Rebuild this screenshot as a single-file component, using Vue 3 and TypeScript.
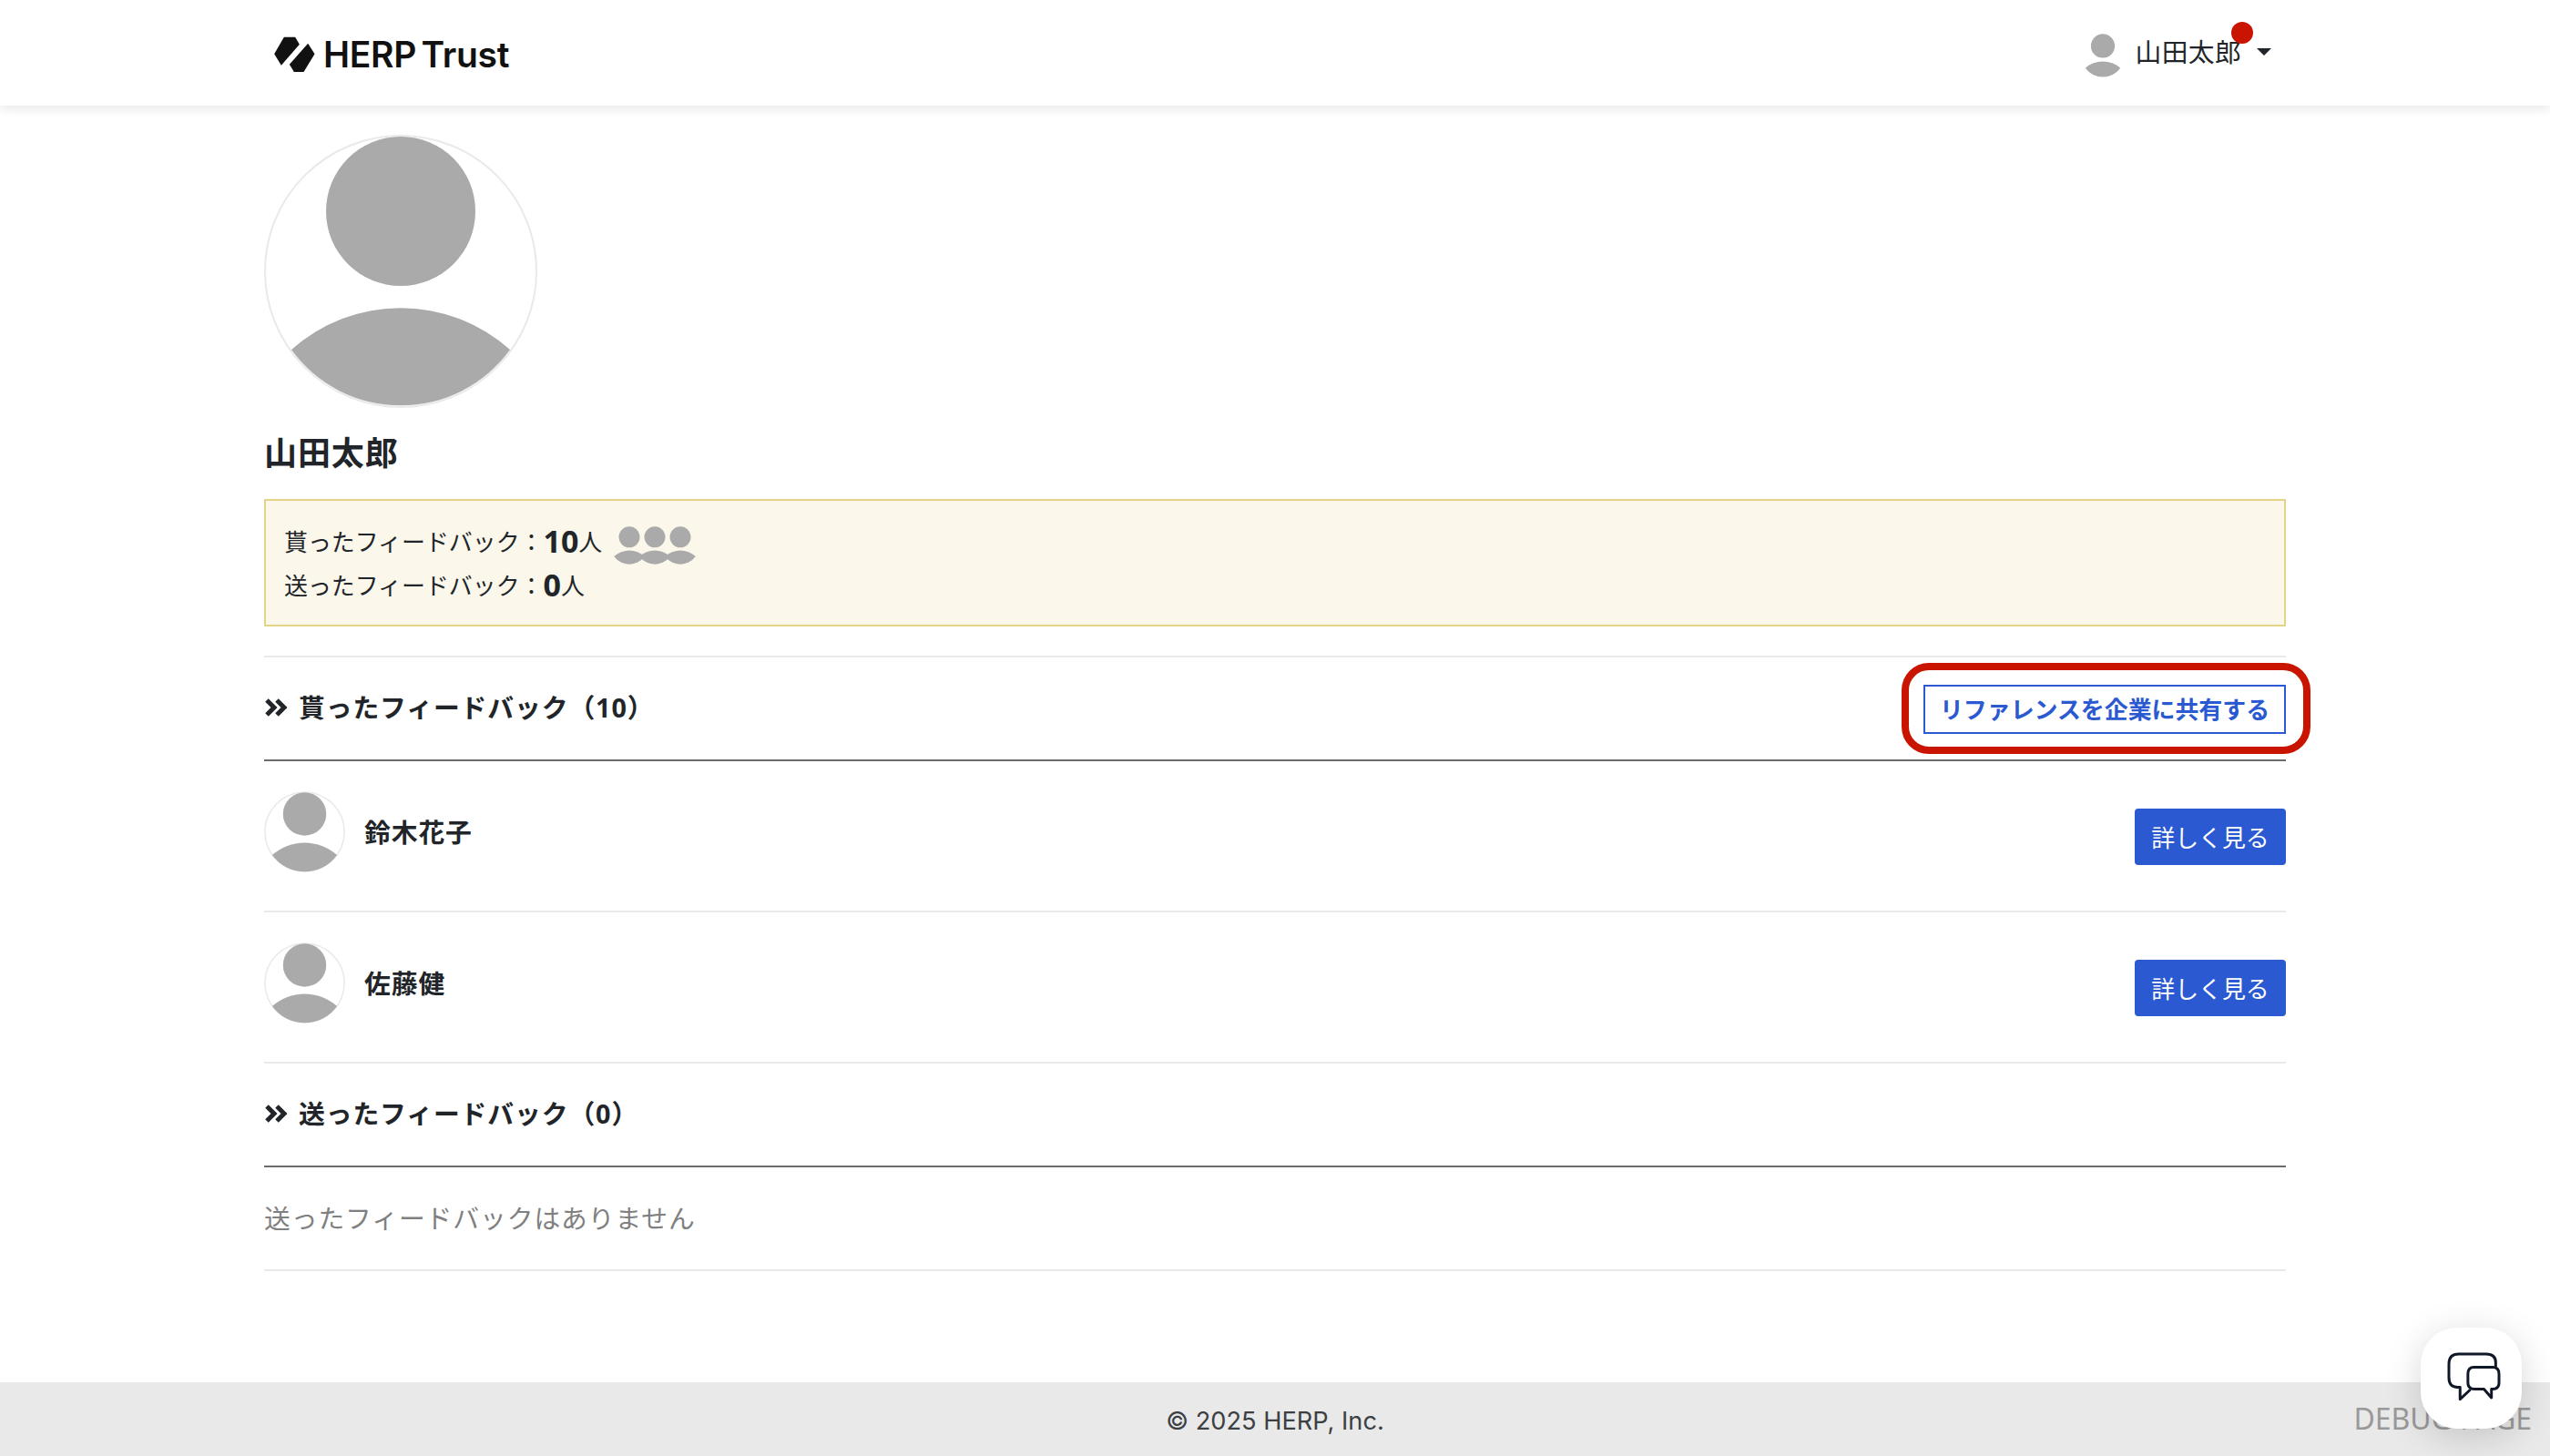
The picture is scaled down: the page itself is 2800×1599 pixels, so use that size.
<script setup lang="ts">
const people = [
  { name: '鈴木花子' },
  { name: '佐藤健' },
]
</script>

<template>
  <div class="page">
    <header class="nav">
      <div class="nav-inner">
        <div class="logo">
          <svg class="logo-mark" viewBox="60 120 140 120" aria-hidden="true">
            <path d="M95 122 L132 122 L146 146 L86 215 L63 178 Z" fill="#111" />
            <path d="M174 143 L196 178 L160 237 L128 237 L113 212 Z" fill="#111" />
          </svg>
          <span class="logo-text">HERP Trust</span>
        </div>
        <div class="user">
          <svg class="user-icon" viewBox="0 0 300 300" aria-hidden="true">
            <circle cx="150" cy="84" r="82" fill="#aaa" />
            <path d="M30 236 A180 180 0 0 1 270 236 A148 148 0 0 1 30 236 Z" fill="#aaa" />
          </svg>
          <span class="user-name">山田太郎</span>
          <span class="caret"></span>
          <span class="dot"></span>
        </div>
      </div>
    </header>

    <main class="main">
      <div class="avatar-lg">
        <svg viewBox="0 0 300 300" aria-hidden="true">
          <circle cx="150" cy="150" r="149" fill="#fff" stroke="#e9e9e9" stroke-width="2" />
          <circle cx="150" cy="84" r="82" fill="#aaa" />
          <path d="M30 236 A180 180 0 0 1 270 236 A148 148 0 0 1 30 236 Z" fill="#aaa" />
        </svg>
      </div>
      <h1 class="title">山田太郎</h1>

      <div class="summary">
        <div class="summary-row">
          <span>貰ったフィードバック：</span><b>10</b><span>人</span>
          <span class="crowd">
            <svg v-for="n in 3" :key="n" viewBox="0 0 300 300" aria-hidden="true">
              <circle cx="150" cy="84" r="82" fill="#aaa" />
              <path d="M30 236 A180 180 0 0 1 270 236 A148 148 0 0 1 30 236 Z" fill="#aaa" />
            </svg>
          </span>
        </div>
        <div class="summary-row">
          <span>送ったフィードバック：</span><b>0</b><span>人</span>
        </div>
      </div>

      <section class="head head-first">
        <h2 class="head-title"><svg class="chev" viewBox="0 0 26 22" aria-hidden="true"><path d="M3 3 L11 11 L3 19 M14 3 L22 11 L14 19" fill="none" stroke="#212529" stroke-width="5" /></svg>貰ったフィードバック（10）</h2>
        <div class="share-wrap">
          <button class="share" type="button">リファレンスを企業に共有する</button>
          <span class="highlight"></span>
        </div>
      </section>

      <div v-for="p in people" :key="p.name" class="row">
        <div class="person">
          <svg class="avatar-sm" viewBox="0 0 300 300" aria-hidden="true">
            <circle cx="150" cy="150" r="147" fill="#fff" stroke="#e9e9e9" stroke-width="5" />
            <circle cx="150" cy="84" r="80" fill="#aaa" />
            <path d="M30 236 A180 180 0 0 1 270 236 A148 148 0 0 1 30 236 Z" fill="#aaa" />
          </svg>
          <span class="person-name">{{ p.name }}</span>
        </div>
        <button class="more" type="button">詳しく見る</button>
      </div>

      <section class="head head-second">
        <h2 class="head-title"><svg class="chev" viewBox="0 0 26 22" aria-hidden="true"><path d="M3 3 L11 11 L3 19 M14 3 L22 11 L14 19" fill="none" stroke="#212529" stroke-width="5" /></svg>送ったフィードバック（0）</h2>
      </section>
      <p class="empty">送ったフィードバックはありません</p>
    </main>

    <footer class="footer">© 2025 HERP, Inc.</footer>

    <span class="debug">DEBUG PAGE</span>
    <button class="chat" type="button" aria-label="chat">
      <svg viewBox="555 165 190 172" aria-hidden="true">
        <path d="M722 218 V205 Q722 177 690 177 H600 Q567 177 567 210 V255 Q567 287 595 287 H604 V327 L636 297" fill="none" stroke="#101828" stroke-width="9" stroke-linejoin="round" stroke-linecap="round" />
        <path d="M650 221 H712 Q733 221 733 243 V272 Q733 293 712 293 H708 V322 L683 293 H652 Q630 293 630 272 V243 Q630 221 650 221 Z" fill="none" stroke="#101828" stroke-width="9" stroke-linejoin="round" />
      </svg>
    </button>
  </div>
</template>

<style>
html, body { margin: 0; background: #fff; }
</style>

<style scoped>
.page {
  position: relative;
  height: 1599px;
  display: flex;
  flex-direction: column;
  overflow: hidden;
  font-family: "Noto Sans", "Noto Sans CJK JP", sans-serif;
  color: #212529;
  background: #fff;
}
.nav {
  height: 116px;
  flex: none;
  background: #fff;
  box-shadow: 0 3px 12px rgba(0, 0, 0, 0.1);
  position: relative;
}
.nav-inner {
  width: 2220px;
  height: 100%;
  margin: 0 auto;
  display: flex;
  align-items: flex-start;
  justify-content: space-between;
}
.logo {
  display: flex;
  align-items: center;
  gap: 8px;
  margin-left: 10px;
  margin-top: 40px;
}
.logo-mark { width: 47px; height: 40px; display: block; }
.logo-text {
  font-family: Inter, sans-serif;
  font-weight: 600;
  font-size: 39px;
  line-height: 40px;
  letter-spacing: -0.3px;
  word-spacing: -4px;
  color: #111;
}
.user {
  position: relative;
  display: flex;
  align-items: center;
  margin-top: 37px;
  margin-right: 16px;
}
.user-icon { width: 48px; height: 48px; display: block; margin-right: 12px; }
.user-name { font-size: 28.8px; line-height: 40px; margin-top: -8px; letter-spacing: 0.3px; }
.caret {
  width: 0;
  height: 0;
  margin-left: 17px;
  margin-top: -8px;
  border-top: 8px solid #212529;
  border-left: 8px solid transparent;
  border-right: 8px solid transparent;
}
.dot {
  position: absolute;
  left: 165px;
  top: -13px;
  width: 24px;
  height: 24px;
  border-radius: 50%;
  background: #c91400;
}
.main {
  width: 2220px;
  margin: 0 auto;
  padding-top: 32px;
  flex: 1;
}
.avatar-lg { width: 300px; height: 300px; }
.avatar-lg svg { width: 300px; height: 300px; display: block; }
.title {
  margin: 26px 0 0;
  font-size: 36px;
  line-height: 48px;
  font-weight: 700;
  letter-spacing: 0.9px;
}
.summary {
  margin-top: 26px;
  height: 140px;
  box-sizing: border-box;
  padding: 20px 20px;
  border: 2px solid #e3d488;
  background: #fbf7ea;
  font-size: 25.92px;
}
.summary-row {
  display: flex;
  align-items: center;
  height: 48px;
}
.summary-row b { font-size: 34px; font-weight: 700; line-height: 40px; }
.crowd { display: flex; margin-left: 9px; margin-top: 10px; }
.crowd svg { width: 42px; height: 42px; display: block; margin-right: -14px; }
.head {
  height: 114px;
  box-sizing: border-box;
  display: flex;
  align-items: center;
  justify-content: space-between;
  border-bottom: 2px solid #6c6c6c;
}
.head-first {
  margin-top: 32px;
  border-top: 2px solid #e9e9e9;
  height: 116px;
}
.head-title {
  margin: -2px 0 0;
  display: flex;
  align-items: center;
  font-size: 28.8px;
  line-height: 40px;
  font-weight: 700;
  letter-spacing: 0.9px;
}
.chev { width: 26px; height: 22px; margin-right: 12px; }
.share-wrap { position: relative; display: flex; margin-top: 2px; }
.share {
  width: 398px;
  height: 54px;
  box-sizing: border-box;
  padding: 0 0 2px;
  border: 2px solid #2a59d1;
  border-radius: 0;
  background: #fff;
  color: #2a59d1;
  font-family: inherit;
  font-size: 25.92px;
  font-weight: 700;
}
.highlight {
  position: absolute;
  left: -24px;
  right: -27px;
  top: -24px;
  bottom: -22px;
  border: 8px solid #c91400;
  border-radius: 30px;
  pointer-events: none;
}
.row {
  height: 166px;
  box-sizing: border-box;
  border-bottom: 2px solid #e9e9e9;
  display: flex;
  align-items: center;
  justify-content: space-between;
}
.person { display: flex; align-items: center; gap: 21px; margin-top: -10px; }
.avatar-sm { width: 89px; height: 89px; display: block; }
.person-name { font-size: 28.8px; font-weight: 700; line-height: 40px; margin-top: 2px; letter-spacing: 0.9px; }
.more {
  width: 166px;
  height: 62px;
  margin-top: 2px;
  padding: 0;
  border: 0;
  border-radius: 4px;
  background: #2a59d1;
  color: #fff;
  font-family: inherit;
  font-size: 25.92px;
}
.empty {
  margin: 0;
  height: 114px;
  box-sizing: border-box;
  padding-bottom: 4px;
  border-bottom: 2px solid #e9e9e9;
  display: flex;
  align-items: center;
  font-size: 28.8px;
  letter-spacing: 0.9px;
  color: #808080;
}
.footer {
  flex: none;
  height: 81px;
  box-sizing: border-box;
  padding-top: 3px;
  background: #e9e9e9;
  display: flex;
  align-items: center;
  justify-content: center;
  font-family: Inter, sans-serif;
  font-size: 27.2px;
  color: #3c4043;
}
.debug {
  position: absolute;
  right: 20px;
  top: 1538px;
  font-family: "Noto Sans", sans-serif;
  font-size: 32px;
  line-height: 40px;
  color: #999;
}
.chat {
  position: absolute;
  left: 2658px;
  top: 1458px;
  width: 111px;
  height: 111px;
  padding: 0;
  border: 0;
  border-radius: 40px;
  background: #fff;
  box-shadow: 0 8px 40px rgba(0, 0, 0, 0.16);
  display: flex;
  align-items: center;
  justify-content: center;
}
.chat svg { width: 63px; height: 57px; display: block; margin-left: 6px; margin-top: -4px; }
</style>
